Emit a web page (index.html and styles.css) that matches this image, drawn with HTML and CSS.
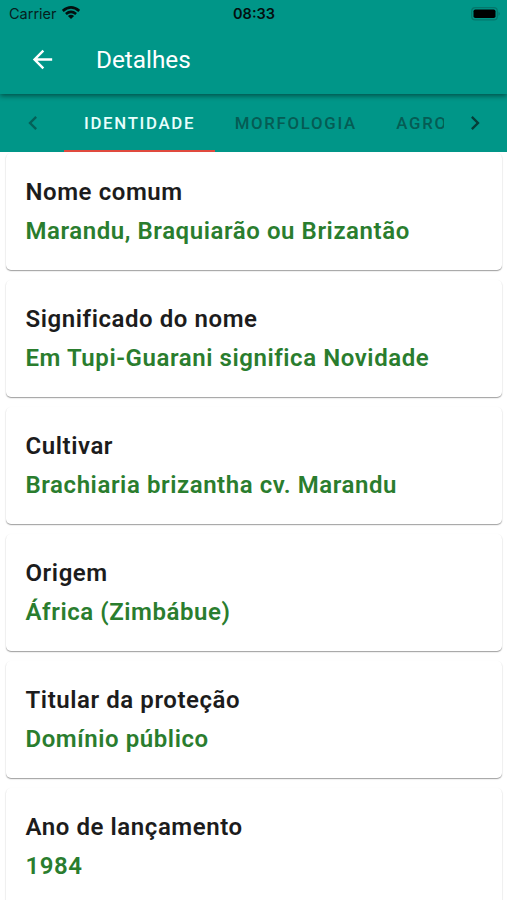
FILE: index.html
```html
<!DOCTYPE html>
<html lang="pt-BR">
<head>
<meta charset="utf-8">
<title>Detalhes</title>
<link rel="stylesheet" href="styles.css">
</head>
<body>
<header class="top">
  <div class="status">
    <div class="carrier"><span>Carrier</span>
      <svg width="18" height="13" viewBox="0 0 18 13" fill="none" stroke="#03100f" stroke-width="2.700"><path d="M.8 4.900Q9-2 17.200 4.900M3.900 8Q9 3.800 14.100 8"/><path d="M5.900 9.900Q9 7.800 12.100 9.900L9 13Z" fill="#03100f" stroke="none"/></svg>
    </div>
    <div class="clock">08:33</div>
    <div class="battery"><svg width="30" height="14" viewBox="0 0 30 14"><rect x=".7" y=".7" width="25.600" height="12.200" rx="3.500" fill="none" stroke="#05776c" stroke-width="1.200"/><rect x="2.500" y="2.500" width="22" height="8.600" rx="1.800" fill="#000"/><path d="M27.500 4.700q2.600 2.100 0 4.200z" fill="#05776c"/></svg></div>
  </div>
  <div class="bar">
    <svg class="back" viewBox="0 0 24 24" fill="#fff"><path d="M20 11H7.830l5.590-5.590L12 4l-8 8 8 8 1.410-1.410L7.830 13H20v-2z"/></svg>
    <h1>Detalhes</h1>
  </div>
</header>
<nav class="tabs">
  <svg class="chev dim" viewBox="0 0 24 24"><path d="M15.410 7.410 14 6l-6 6 6 6 1.410-1.410L10.830 12z"/></svg>
  <div class="strip">
    <div class="tab active">IDENTIDADE</div>
    <div class="tab">MORFOLOGIA</div>
    <div class="tab">AGRONOMIA</div>
  </div>
  <svg class="chev next" viewBox="0 0 24 24"><path d="M10 6 8.590 7.410 13.170 12l-4.580 4.590L10 18l6-6z"/></svg>
</nav>
<main>
  <section class="card"><h2>Nome comum</h2><p>Marandu, Braquiarão ou Brizantão</p></section>
  <section class="card"><h2>Significado do nome</h2><p>Em Tupi-Guarani significa Novidade</p></section>
  <section class="card"><h2>Cultivar</h2><p>Brachiaria brizantha cv. Marandu</p></section>
  <section class="card"><h2>Origem</h2><p>África (Zimbábue)</p></section>
  <section class="card"><h2>Titular da proteção</h2><p>Domínio público</p></section>
  <section class="card"><h2>Ano de lançamento</h2><p>1984</p></section>
</main>
</body>
</html>
```
FILE: styles.css
```css
* { box-sizing: border-box; }
body { margin: 0; height: 900px; overflow: hidden; background: #fff; font-family: Roboto, sans-serif; }
h1, h2, p { margin: 0; }
.top { position: relative; height: 94px; background: #009688; box-shadow: 0 2px 5px rgba(0,0,0,.45); }
.status { display: grid; grid-template-columns: 1fr auto 1fr; align-items: center; height: 27px; color: #06201d; font: 14.500px/27px Inter, sans-serif; }
.carrier { display: flex; align-items: center; gap: 5px; padding-left: 9px; }
.carrier svg { margin-top: -2px; }
.clock { padding-left: 1px; font-weight: 600; color: #03100f; }
.battery { display: flex; justify-content: flex-end; padding-right: 6px; }
.bar { display: flex; align-items: center; height: 65px; padding-left: 28px; }
.bar h1 { margin-left: 39px; color: #fff; font-size: 24.300px; font-weight: 400; }
.back { flex: none; width: 29px; height: 29px; }
.tabs { position: relative; z-index: -1; display: flex; align-items: center; height: 58px; background: #009688; }
.chev { flex: none; width: 28px; height: 28px; margin: 0 18px; fill: #063e39; }
.dim { margin-left: 19px; opacity: .6; }
.next { margin: 0 18px 0 17px; }
.strip { display: flex; flex: 1; height: 58px; margin-left: -1px; overflow: hidden; }
.tab { flex: none; padding: 0 19.500px 0 20px; line-height: 58px; font-size: 16.800px; font-weight: 500; letter-spacing: 1.700px; color: #055c54; }
.active { color: #e8fffc; border-bottom: 2px solid #e04a3e; }
main { display: flex; flex-direction: column; gap: 10px; padding: 1px 5px 0 6px; }
.card { flex: none; height: 117px; padding: 20px 19.500px; border-radius: 5px; background: #fff; box-shadow: 0 1px 1px rgba(0,0,0,.3), 0 1px 2px rgba(0,0,0,.12); }
.card h2, .card p { font-size: 24px; line-height: 39px; font-weight: 600; letter-spacing: .57px; color: #1c1c1c; white-space: nowrap; }
.card p { color: #2a7d2e; }
```
